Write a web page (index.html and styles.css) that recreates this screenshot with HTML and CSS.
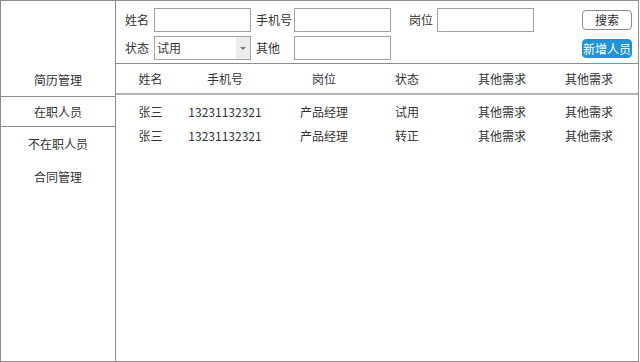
FILE: index.html
```html
<!DOCTYPE html>
<html lang="zh-CN">
<head>
    <meta charset="UTF-8">
    <meta name="viewport" content="width=device-width, initial-scale=1.0">
    <title>在职人员</title>
    <link rel="stylesheet" href="styles.css">
</head>
<body>
    <div class="frame">
        <aside class="sidebar">
            <div class="nav-item">简历管理</div>
            <div class="nav-item active">在职人员</div>
            <div class="nav-item">不在职人员</div>
            <div class="nav-item">合同管理</div>
        </aside>

        <main class="main">
            <div class="filters">
                <div class="filter-row">
                    <label class="lbl">姓名</label>
                    <input class="field" type="text">
                    <label class="lbl lbl-wide">手机号</label>
                    <input class="field" type="text">
                    <label class="lbl lbl-post">岗位</label>
                    <input class="field" type="text">
                    <button class="btn btn-search">搜索</button>
                </div>
                <div class="filter-row">
                    <label class="lbl">状态</label>
                    <div class="select">
                        <span class="select-value">试用</span>
                        <span class="select-arrow"></span>
                    </div>
                    <label class="lbl lbl-wide">其他</label>
                    <input class="field" type="text">
                    <button class="btn btn-add">新增人员</button>
                </div>
            </div>

            <div class="table">
                <div class="row thead">
                    <div>姓名</div>
                    <div>手机号</div>
                    <div>岗位</div>
                    <div>状态</div>
                    <div>其他需求</div>
                    <div>其他需求</div>
                </div>
                <div class="tbody">
                    <div class="row">
                        <div>张三</div>
                        <div>13231132321</div>
                        <div>产品经理</div>
                        <div>试用</div>
                        <div>其他需求</div>
                        <div>其他需求</div>
                    </div>
                    <div class="row">
                        <div>张三</div>
                        <div>13231132321</div>
                        <div>产品经理</div>
                        <div>转正</div>
                        <div>其他需求</div>
                        <div>其他需求</div>
                    </div>
                </div>
            </div>
        </main>
    </div>
</body>
</html>
```

FILE: styles.css
```css
* {
    box-sizing: border-box;
}
body {
    margin: 0;
    background: #fff;
    font-family: "Noto Sans CJK SC", "Liberation Sans", sans-serif;
    font-size: 12px;
    color: #333;
}
.frame {
    display: flex;
    width: 639px;
    height: 362px;
    border: 1px solid #8c8c8c;
}

/* menu de gauche */
.sidebar {
    width: 115px;
    flex-shrink: 0;
    border-right: 1px solid #8c8c8c;
    padding-top: 62px;
}
.nav-item {
    height: 33px;
    line-height: 33px;
    text-align: center;
}
.nav-item.active {
    height: 31px;
    line-height: 29px;
    border-top: 1px solid #8c8c8c;
    border-bottom: 1px solid #8c8c8c;
}

/* zone principale */
.main {
    flex: 1;
    min-width: 0;
}
.filters {
    height: 63px;
    padding: 7px 6px 0 9px;
    border-bottom: 1px solid #8c8c8c;
}
.filter-row {
    display: flex;
    align-items: center;
    height: 24px;
    margin-bottom: 4px;
}
.lbl {
    width: 24px;
    margin-right: 5px;
    line-height: 24px;
    white-space: nowrap;
}
.lbl-wide {
    width: 36px;
    margin-left: 5px;
    margin-right: 2px;
}
.lbl-post {
    margin-left: 18px;
    margin-right: 4px;
}
.field {
    width: 97px;
    height: 24px;
    border: 1px solid #a3a3a3;
    background: #fff;
    padding: 0 2px;
    font: inherit;
    outline: none;
}
.select {
    display: flex;
    width: 97px;
    height: 24px;
    border: 1px solid #a3a3a3;
    background: #fff;
}
.select-value {
    flex: 1;
    padding-left: 2px;
    line-height: 22px;
}
.select-arrow {
    position: relative;
    width: 14px;
    background: #ececec;
}
.select-arrow::after {
    content: "";
    position: absolute;
    left: 4px;
    top: 10px;
    border-left: 3px solid transparent;
    border-right: 3px solid transparent;
    border-top: 3px solid #7a7a7a;
}
.btn {
    margin-left: auto;
    width: 50px;
    height: 20px;
    padding: 0;
    border-radius: 4px;
    font: inherit;
    line-height: 18px;
    cursor: pointer;
}
.btn-search {
    background: #fff;
    color: #333;
    border: 1px solid #8c8c8c;
}
.btn-add {
    background: #1f93d6;
    color: #fff;
    border: 1px solid #1f93d6;
    height: 19px;
    margin-top: 1px;
}

/* tableau */
.row {
    display: grid;
    grid-template-columns: 53px 96px 102px 64px 126px 48px;
    padding-left: 8px;
    text-align: center;
    white-space: nowrap;
}
.thead {
    height: 31px;
    line-height: 29px;
    border-bottom: 2px solid #b5b5b5;
}
.tbody {
    padding-top: 5px;
}
.tbody .row {
    height: 24px;
    line-height: 24px;
}
```
